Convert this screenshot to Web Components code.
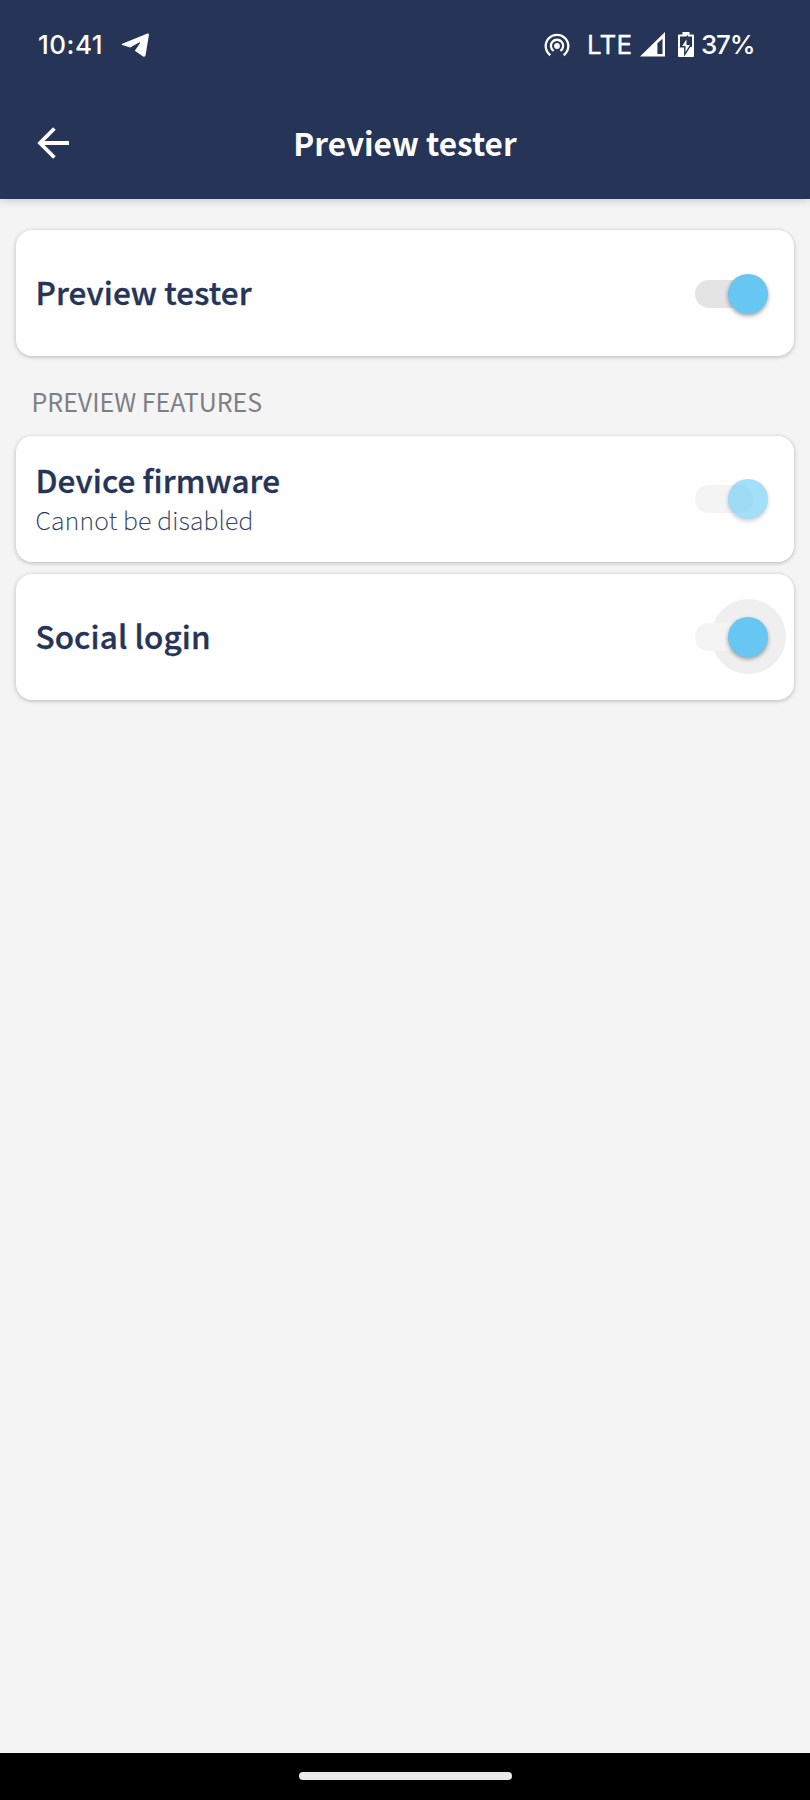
<!DOCTYPE html>
<html lang="en">
<head>
<meta charset="utf-8">
<title>Preview tester</title>
<style>
html,body{margin:0;height:100%}
body{background:#f4f4f4;font-family:"Noto Sans CJK SC","Noto Sans CJK JP","Noto Sans",sans-serif;color:#263457}
</style>
</head>
<body>
<app-screen>
  <status-bar slot="top"></status-bar>
  <app-bar slot="top">Preview tester</app-bar>
  <setting-card><span>Preview tester</span><toggle-switch slot="control"></toggle-switch></setting-card>
  <section-title>PREVIEW FEATURES</section-title>
  <setting-card><span>Device firmware</span><span slot="detail">Cannot be disabled</span><toggle-switch slot="control" disabled></toggle-switch></setting-card>
  <setting-card><span>Social login</span><toggle-switch slot="control" pressed></toggle-switch></setting-card>
  <nav-bar slot="bottom"></nav-bar>
</app-screen>
<script>
const define = (name, html) => customElements.define(name, class extends HTMLElement {
  constructor() {
    super();
    const t = document.createElement('template');
    t.innerHTML = html;
    this.attachShadow({ mode: 'open' }).append(t.content.cloneNode(true));
  }
});

define('app-screen', `<style>
:host{display:flex;flex-direction:column;height:1800px;width:810px;background:#f4f4f4;overflow:hidden}
header{height:198.7px;background:#263457;box-shadow:0 1px 9px rgba(0,0,0,.2);flex:none}
main{flex:1;padding:31.3px 16px 0;display:flex;flex-direction:column}
</style><header><slot name="top"></slot></header><main><slot></slot></main><slot name="bottom"></slot>`);

define('status-bar', `<style>
:host{display:flex;height:90px;box-sizing:border-box;align-items:center;padding:0 56px 0 38px;color:#fff;font:500 26px/30px Inter,Roboto,sans-serif}
svg{display:block;flex:none}
.time{letter-spacing:.5px;width:83px}
.gap{flex:1}
.net{letter-spacing:.2px;margin-left:17px;width:53px;font-weight:400;-webkit-text-stroke:.3px #fff}
.pct{letter-spacing:-1.2px;margin-left:7px;width:53px}
</style>
<span class="time">10:41</span>
<svg width="28" height="26" viewBox="0 -1 28 25"><path fill="#fff" d="M1.2 10.2 26.5.1q1.7-.4 1.4 1.4L24.6 21.4q-.5 2.8-2.8 1.3L13.8 17.3 18.8 10Q20 8 17.6 9.2L9.2 14 1.3 11.6Q-.2 11 1.2 10.2Z"/></svg>
<span class="gap"></span>
<svg width="26" height="24" viewBox="0 0 26 24" fill="none" stroke="#fff" stroke-width="2.3"><circle cx="13" cy="13" r="2.9" fill="#fff" stroke="none"/><path d="M9.6 17.9a6.1 6.1 0 1 1 6.8 0M6.3 22.2a11.3 11.3 0 1 1 13.4 0"/></svg>
<span class="net">LTE</span>
<svg style="margin-top:-2px" width="25" height="25" viewBox="0 0 25 25"><path fill="#fff" fill-rule="evenodd" d="M0 24.5 25 0V24.5ZM17.4 11.2V22H22.5V6.8Z"/></svg>
<svg style="margin:-2px 0 0 13px" width="16" height="25" viewBox="0 0 16 25"><path fill="#fff" d="M4.5 0h7v2.4H15q1 0 1 1V24q0 1-1 1H1q-1 0-1-1V3.4q0-1 1-1h3.5z"/><path fill="#263457" d="M2 4.5H14V15H2z"/><path fill="#fff" stroke="#263457" stroke-width="1.4" d="M9.2 4.8 2.8 14.8H6.8V22.4L13.2 12.3H9.2z"/></svg>
<span class="pct">37%</span>`);

define('app-bar', `<style>
:host{display:grid;grid-template-columns:110px 1fr 110px;height:106px;align-items:center;color:#fff}
svg{margin:0 0 0 37px;display:block}
h1{margin:-2px 0 0;text-align:center;font-size:31.5px;font-weight:700;line-height:40px}
</style>
<svg width="32" height="32" viewBox="0 0 32 32" fill="none" stroke="#fff" stroke-width="3.8"><path d="M32 16H3.5M17.4 1.5 3 16 17.4 30.5"/></svg>
<h1><slot></slot></h1>`);

define('setting-card', `<style>
:host{display:flex;flex:none;align-items:center;box-sizing:border-box;height:126px;margin-bottom:12px;padding:0 26px 0 19.4px;background:#fff;border-radius:16px;box-shadow:0 1px 4px rgba(0,0,0,.26)}
.text{flex:1;display:flex;flex-direction:column;margin-top:-4px}
.name{font-size:31.5px;font-weight:500;line-height:40px;letter-spacing:.1px;-webkit-text-stroke:.35px #263457}
::slotted([slot=detail]){display:block;font-size:25px;font-weight:100;line-height:37px;padding-top:2px;margin-bottom:-3px;letter-spacing:.22px;-webkit-text-stroke:.25px #263457}
</style><div class="text"><div class="name"><slot></slot></div><slot name="detail"></slot></div><slot name="control"></slot>`);

define('section-title', `<style>
:host{display:block;height:68px;box-sizing:border-box;padding:16px 0 0 15.5px;font-size:25px;line-height:34px;color:#7d7f84;letter-spacing:-.03px}
</style><slot></slot>`);

define('toggle-switch', `<style>
:host{display:flex;flex:none;align-items:center;width:73px;height:40px;position:relative;top:1px}
:host([disabled]),:host([pressed]){top:.3px}
.track{width:58px;height:28px;border-radius:14px;background:#e4e4e4}
.ripple,.knob{position:absolute;border-radius:50%}
.ripple{display:none;width:75px;height:75px;right:-17.5px;top:-18px;background:#efefef}
.knob{width:40px;height:40px;right:0;top:0;background:#67c6f2;box-shadow:0 2px 4px rgba(0,0,0,.36)}
:host([disabled]) .track,:host([pressed]) .track{background:#f4f4f4;position:relative}
:host([disabled]) .knob{background:#a3dff8;box-shadow:0 2px 4px rgba(0,0,0,.2)}
:host([disabled]) .knob::before{content:"";position:absolute;left:-33px;top:6px;width:58px;height:28px;border-radius:14px;background:#9fdaf4;clip-path:circle(20px at 53px 14px)}
:host([pressed]) .ripple{display:block}
</style><div class="ripple"></div><div class="track"></div><div class="knob"></div>`);

define('nav-bar', `<style>
:host{display:flex;flex:none;height:47px;background:#000;justify-content:center;align-items:center}
i{width:213px;height:8px;border-radius:4px;background:#ebe9ea;margin-top:-1px}
</style><i></i>`);
</script>
</body>
</html>
